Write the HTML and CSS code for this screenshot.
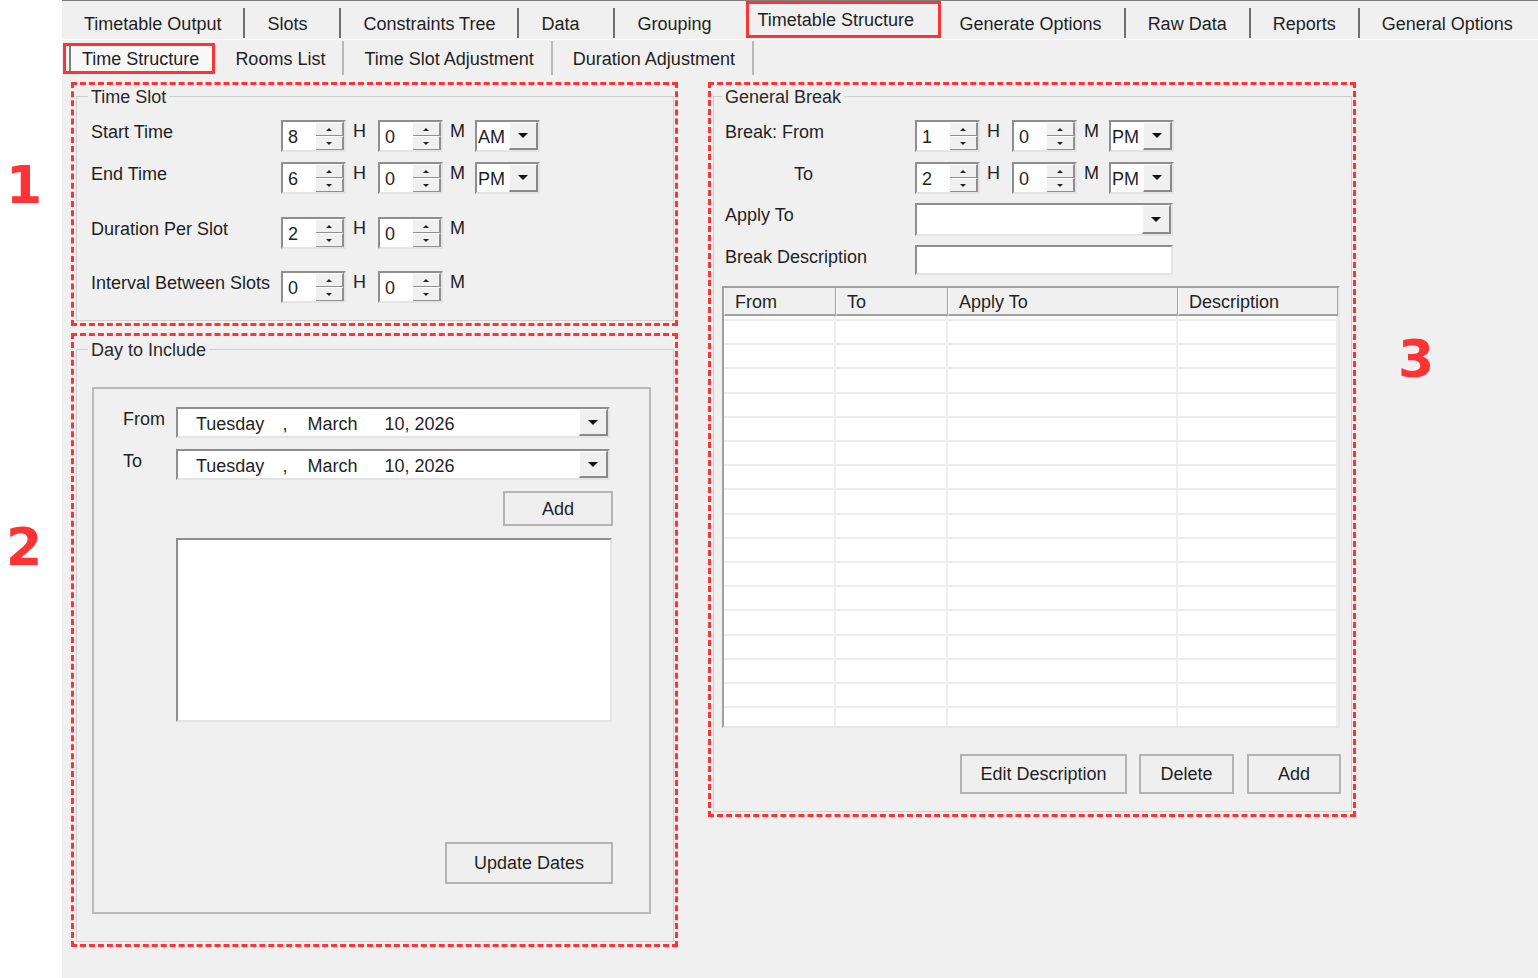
FILE: index.html
```html
<!DOCTYPE html>
<html lang="en">
<head>
    <meta charset="UTF-8">
    <meta name="viewport" content="width=device-width, initial-scale=1.0">
    <title>Timetable Structure</title>
    <link rel="stylesheet" href="styles.css">
</head>
<body>
<div class="screen">

    <!-- annotation numbers on the white margin -->
    <div class="gutter">
        <div class="mark-num num-1">1</div>
        <div class="mark-num num-2">2</div>
    </div>

    <div class="app">
        <!-- Main tabs -->
        <div class="tabs">
            <div class="tab">Timetable Output</div>
            <div class="tab">Slots</div>
            <div class="tab">Constraints Tree</div>
            <div class="tab">Data</div>
            <div class="tab tab-before-current">Grouping</div>
            <div class="tab tab-current">Timetable Structure</div>
            <div class="tab tab-after-current">Generate Options</div>
            <div class="tab">Raw Data</div>
            <div class="tab">Reports</div>
            <div class="tab tab-end">General Options</div>
        </div>

        <!-- Sub tabs -->
        <div class="subtabs">
            <div class="subtab subtab-current">Time Structure</div>
            <div class="subtab">Rooms List</div>
            <div class="subtab">Time Slot Adjustment</div>
            <div class="subtab">Duration Adjustment</div>
        </div>

        <div class="content">
            <div class="col-left">

                <!-- 1: Time Slot -->
                <div class="mark-box">
                    <fieldset class="group group-time">
                        <legend>Time Slot</legend>
                        <div class="row">
                            <span class="label">Start Time</span>
                            <div class="spin"><span class="spin-val">8</span><span class="spin-btns"><i class="up"></i><i class="down"></i></span></div>
                            <span class="unit">H</span>
                            <div class="spin"><span class="spin-val">0</span><span class="spin-btns"><i class="up"></i><i class="down"></i></span></div>
                            <span class="unit">M</span>
                            <div class="combo"><span class="combo-val">AM</span><span class="drop"></span></div>
                        </div>
                        <div class="row">
                            <span class="label">End Time</span>
                            <div class="spin"><span class="spin-val">6</span><span class="spin-btns"><i class="up"></i><i class="down"></i></span></div>
                            <span class="unit">H</span>
                            <div class="spin"><span class="spin-val">0</span><span class="spin-btns"><i class="up"></i><i class="down"></i></span></div>
                            <span class="unit">M</span>
                            <div class="combo"><span class="combo-val">PM</span><span class="drop"></span></div>
                        </div>
                        <div class="row row-spaced">
                            <span class="label">Duration Per Slot</span>
                            <div class="spin"><span class="spin-val">2</span><span class="spin-btns"><i class="up"></i><i class="down"></i></span></div>
                            <span class="unit">H</span>
                            <div class="spin"><span class="spin-val">0</span><span class="spin-btns"><i class="up"></i><i class="down"></i></span></div>
                            <span class="unit">M</span>
                        </div>
                        <div class="row row-spaced-b">
                            <span class="label">Interval Between Slots</span>
                            <div class="spin"><span class="spin-val">0</span><span class="spin-btns"><i class="up"></i><i class="down"></i></span></div>
                            <span class="unit">H</span>
                            <div class="spin"><span class="spin-val">0</span><span class="spin-btns"><i class="up"></i><i class="down"></i></span></div>
                            <span class="unit">M</span>
                        </div>
                    </fieldset>
                </div>

                <!-- 2: Day to Include -->
                <div class="mark-box">
                    <fieldset class="group group-days">
                        <legend>Day to Include</legend>
                        <div class="panel">
                            <div class="prow">
                                <span class="plabel">From</span>
                                <div class="datepick">
                                    <span class="date-text"><span>Tuesday</span><span class="d-comma">,</span><span class="d-month">March</span><span class="d-day">10, 2026</span></span>
                                    <span class="drop"></span>
                                </div>
                            </div>
                            <div class="prow">
                                <span class="plabel">To</span>
                                <div class="datepick">
                                    <span class="date-text"><span>Tuesday</span><span class="d-comma">,</span><span class="d-month">March</span><span class="d-day">10, 2026</span></span>
                                    <span class="drop"></span>
                                </div>
                            </div>
                            <button class="btn btn-add-date">Add</button>
                            <div class="listbox"></div>
                            <button class="btn btn-update">Update Dates</button>
                        </div>
                    </fieldset>
                </div>
            </div>

            <!-- 3: General Break -->
            <div class="col-right">
                <div class="mark-box">
                    <fieldset class="group group-break">
                        <legend>General Break</legend>
                        <div class="row">
                            <span class="label">Break: From</span>
                            <div class="spin"><span class="spin-val">1</span><span class="spin-btns"><i class="up"></i><i class="down"></i></span></div>
                            <span class="unit">H</span>
                            <div class="spin"><span class="spin-val">0</span><span class="spin-btns"><i class="up"></i><i class="down"></i></span></div>
                            <span class="unit">M</span>
                            <div class="combo"><span class="combo-val">PM</span><span class="drop"></span></div>
                        </div>
                        <div class="row">
                            <span class="label label-indent">To</span>
                            <div class="spin"><span class="spin-val">2</span><span class="spin-btns"><i class="up"></i><i class="down"></i></span></div>
                            <span class="unit">H</span>
                            <div class="spin"><span class="spin-val">0</span><span class="spin-btns"><i class="up"></i><i class="down"></i></span></div>
                            <span class="unit">M</span>
                            <div class="combo"><span class="combo-val">PM</span><span class="drop"></span></div>
                        </div>
                        <div class="row row-tight">
                            <span class="label">Apply To</span>
                            <div class="combo combo-wide"><span class="combo-val"></span><span class="drop"></span></div>
                        </div>
                        <div class="row row-tight">
                            <span class="label">Break Description</span>
                            <div class="textbox"></div>
                        </div>

                        <div class="grid">
                            <div class="grid-head">
                                <span class="c-from">From</span>
                                <span class="c-to">To</span>
                                <span class="c-apply">Apply To</span>
                                <span class="c-desc">Description</span>
                            </div>
                            <div class="grid-body">
                                <div class="grid-col c-from"></div>
                                <div class="grid-col c-to"></div>
                                <div class="grid-col c-apply"></div>
                                <div class="grid-col c-desc"></div>
                            </div>
                        </div>

                        <div class="btn-row">
                            <button class="btn btn-edit">Edit Description</button>
                            <button class="btn btn-delete">Delete</button>
                            <button class="btn btn-add">Add</button>
                        </div>
                    </fieldset>
                </div>
            </div>

            <div class="mark-num num-3">3</div>
        </div>
    </div>
</div>
</body>
</html>
```

FILE: styles.css
```css
body {
    margin: 0;
    font-family: "Liberation Sans", Arial, sans-serif;
    font-size: 18px;
    color: #1f1f1f;
    background-color: #fff;
}
.screen {
    display: flex;
    min-height: 978px;
}

/* annotation numbers */
.gutter {
    width: 62px;
    flex-shrink: 0;
    display: flex;
    flex-direction: column;
    background-color: #fff;
}
.mark-num {
    width: 48px;
    text-align: center;
    font-family: "DejaVu Sans", sans-serif;
    font-weight: bold;
    font-size: 52px;
    line-height: 52px;
    color: #ff3333;
}
.num-1 {
    margin-top: 159px;
}
.num-2 {
    margin-top: 310px;
}
.num-3 {
    flex-shrink: 0;
    margin: 251px 0 0 36px;
}

.app {
    flex: 1;
    background-color: #f0f0f0;
}

/* main tabs */
.tabs {
    display: flex;
    align-items: flex-end;
    height: 40px;
    box-sizing: border-box;
    border-top: 1px solid #7f7f7f;
    border-bottom: 1px solid #fbfbfb;
    padding-bottom: 1px;
}
.tab {
    height: 30px;
    line-height: 28px;
    padding: 2px 22px 0;
    min-width: 96px;
    box-sizing: border-box;
    border-right: 2px solid #6f6f6f;
    white-space: nowrap;
}
.tab-before-current {
    border-right: none;
}
.tab-current {
    width: 195px;
    height: 37px;
    line-height: 30px;
    margin-left: 12px;
    padding: 1px 0 0 9px;
    border: 3px solid #ff3333;
}
.tab-after-current {
    padding-left: 19px;
}
.tab-end {
    border-right: none;
}

/* sub tabs */
.subtabs {
    display: flex;
    align-items: center;
    height: 36px;
}
.subtab {
    height: 34px;
    line-height: 32px;
    box-sizing: border-box;
    padding: 2px 17px 0 20px;
    border-right: 2px solid #b8b8b8;
    white-space: nowrap;
}
.subtab-current {
    height: 31px;
    line-height: 23px;
    margin-left: 1px;
    padding: 2px 13px 0 16px;
    border: 3px solid #ff3333;
    background-color: #f8f8f8;
    box-shadow: inset 3px 0 0 #f8f8f8, inset 5px 0 0 #7d7d7d;
}

/* content */
.content {
    display: flex;
    align-items: flex-start;
    padding: 6px 0 0 9px;
}
.col-left {
    width: 607px;
    flex-shrink: 0;
    display: flex;
    flex-direction: column;
    gap: 7px;
}
.col-right {
    width: 648px;
    flex-shrink: 0;
    margin-left: 30px;
}
.mark-box {
    display: flex;
    border: 3px dashed #ff3333;
}

/* group boxes */
.group {
    flex: 1;
    min-width: 0;
    margin: 0 1px 2px 2px;
    border: 1px solid #cfcfcf;
    padding: 12px 10px 17px 14px;
}
.group legend {
    padding: 2px 3px 0;
    margin-left: -3px;
    line-height: 21px;
    color: #2a2a2a;
}
.group-days {
    margin-top: 2px;
    padding: 26px 22px 27px 14px;
}
.group-break {
    padding: 12px 11px 17px 8px;
}
.group-break legend {
    margin-left: 0;
}

.row {
    display: flex;
    align-items: flex-start;
}
.row + .row {
    margin-top: 10px;
}
.row.row-spaced {
    margin-top: 23px;
}
.row.row-spaced-b {
    margin-top: 22px;
}
.row.row-tight {
    margin-top: 9px;
}
.label {
    width: 190px;
    flex-shrink: 0;
    padding-top: 2px;
    line-height: 21px;
    white-space: nowrap;
}
.group-break .label {
    margin-left: 3px;
}
.group-break .label-indent {
    width: 121px;
    padding-left: 69px;
}
.unit {
    width: 32px;
    flex-shrink: 0;
    box-sizing: border-box;
    padding: 1px 0 0 7px;
    line-height: 21px;
}

/* sunken inputs */
.spin, .combo, .datepick, .textbox, .listbox {
    box-sizing: border-box;
    background-color: #fff;
    border: 2px solid;
    border-color: #8e8e8e #e4e4e4 #e4e4e4 #8e8e8e;
}
.spin {
    display: flex;
    width: 65px;
    height: 32px;
}
.spin-val {
    flex: 1;
    padding: 3px 0 0 5px;
    line-height: 25px;
}
.spin-btns {
    width: 28px;
    display: flex;
    flex-direction: column;
}
.spin-btns i {
    flex: 1;
    display: flex;
    align-items: center;
    justify-content: center;
    background-color: #f0f0f0;
    border-top: 1px solid #fff;
    border-right: 2px solid #8f8f8f;
    border-bottom: 1px solid #8f8f8f;
}
.spin-btns i::after {
    content: "";
    border-left: 3px solid transparent;
    border-right: 3px solid transparent;
}
.spin-btns .up::after {
    border-bottom: 3px solid #222;
}
.spin-btns .down::after {
    border-top: 3px solid #222;
}

.combo {
    display: flex;
    width: 65px;
    height: 32px;
}
.combo-val {
    flex: 1;
    padding: 2px 0 0 1px;
    line-height: 26px;
}
.combo-wide {
    width: 258px;
    height: 33px;
}
.drop {
    width: 29px;
    box-sizing: border-box;
    display: flex;
    align-items: center;
    justify-content: center;
    background-color: #f0f0f0;
    border-top: 1px solid #fff;
    border-left: 1px solid #fff;
    border-right: 2px solid #8a8a8a;
    border-bottom: 2px solid #8a8a8a;
}
.drop::after {
    content: "";
    border-left: 5px solid transparent;
    border-right: 5px solid transparent;
    border-top: 5px solid #111;
}
.textbox {
    width: 258px;
    height: 30px;
}

/* day to include */
.panel {
    display: flex;
    flex-direction: column;
    margin-left: 1px;
    border: 2px solid #bababa;
    padding: 18px 36px 28px 29px;
}
.prow {
    display: flex;
    align-items: flex-start;
}
.prow + .prow {
    margin-top: 11px;
}
.plabel {
    width: 53px;
    padding-top: 2px;
    line-height: 21px;
}
.datepick {
    display: flex;
    width: 434px;
    height: 31px;
}
.date-text {
    flex: 1;
    padding: 3px 0 0 18px;
    line-height: 24px;
    white-space: nowrap;
}
.d-comma {
    margin-left: 18px;
}
.d-month {
    margin-left: 20px;
}
.d-day {
    margin-left: 27px;
}
.listbox {
    width: 436px;
    height: 184px;
    margin: 12px 0 0 53px;
}

/* buttons */
.btn {
    font: inherit;
    color: inherit;
    background-color: #efefef;
    border: 2px solid #b3b3b3;
    padding: 0;
}
.btn-add-date {
    align-self: flex-end;
    width: 110px;
    height: 35px;
    margin-top: 11px;
    padding-top: 2px;
}
.btn-update {
    align-self: flex-end;
    width: 168px;
    height: 42px;
    margin-top: 120px;
}
.btn-row {
    display: flex;
    justify-content: flex-end;
    gap: 12px;
    margin: 26px -1px 0 0;
}
.btn-row .btn {
    height: 40px;
}
.btn-edit {
    width: 167px;
}
.btn-delete {
    width: 95px;
    margin-right: 1px;
}
.btn-add {
    width: 94px;
}

/* break grid */
.grid {
    display: flex;
    flex-direction: column;
    height: 442px;
    margin-top: 11px;
    box-sizing: border-box;
    border: 2px solid;
    border-color: #a0a0a0 #e6e6e6 #e6e6e6 #a0a0a0;
    background-color: #fff;
}
.grid-head {
    display: flex;
    height: 28px;
    background-color: #f0f0f0;
}
.grid-head span {
    box-sizing: border-box;
    padding: 3px 0 0 10px;
    line-height: 23px;
    border-left: 1px solid #fff;
    border-right: 1px solid #a0a0a0;
    border-bottom: 2px solid #a0a0a0;
}
.grid-body {
    flex: 1;
    display: flex;
}
.grid-col {
    box-sizing: border-box;
    border-right: 2px solid #eeeeee;
    background-image: repeating-linear-gradient(to bottom, transparent 0 3px, #ececec 3px 5px, transparent 5px 24.2px);
}
.c-from, .c-to {
    width: 112px;
}
.c-apply {
    width: 230px;
}
.c-desc {
    width: 160px;
}
```
